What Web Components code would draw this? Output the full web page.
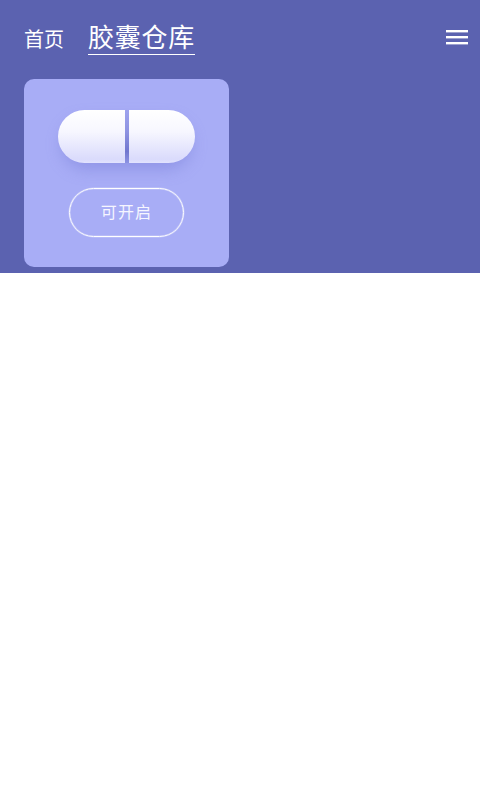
<!DOCTYPE html>
<html lang="zh">
<head>
<meta charset="utf-8">
<style>
  html, body { margin: 0; background: #fff; }
  body { font-family: "Roboto", "Noto Sans CJK SC", sans-serif; }
</style>
</head>
<body>
<capsule-page>
  <nav-tabs slot="nav">
    <span>首页</span>
    <span slot="active">胶囊仓库</span>
  </nav-tabs>
  <capsule-card label="可开启"></capsule-card>
</capsule-page>

<script>
class CapsulePage extends HTMLElement {
  constructor() {
    super();
    this.attachShadow({ mode: "open" }).innerHTML = `<style>
      :host { display: block; background: #5b62b0; height: 273px; box-sizing: border-box; }
      .top { display: flex; justify-content: space-between; align-items: flex-start; height: 79px; padding: 0 12px 0 24px; box-sizing: border-box; }
      .menu { display: block; margin-top: 30px; }
      .body { padding: 0 24px; }
    </style>
    <div class="top">
      <slot name="nav"></slot>
      <svg class="menu" width="22" height="15" viewBox="0 0 22 15" fill="#fff">
        <rect y="0" width="22" height="2.4"/>
        <rect y="6" width="22" height="2.4"/>
        <rect y="12" width="22" height="2.4"/>
      </svg>
    </div>
    <div class="body"><slot></slot></div>`;
  }
}

class NavTabs extends HTMLElement {
  constructor() {
    super();
    this.attachShadow({ mode: "open" }).innerHTML = `<style>
      :host { display: flex; align-items: flex-start; gap: 24px; color: #fff; }
      .plain { font-size: 20px; line-height: 28px; margin-top: 26px; }
      .active { font-size: 26px; line-height: 30px; margin-top: 23px; padding-bottom: 1px; border-bottom: 1px solid #fff; letter-spacing: .75px; }
    </style>
    <div class="plain"><slot></slot></div>
    <div class="active"><slot name="active"></slot></div>`;
  }
}

class CapsuleCard extends HTMLElement {
  constructor() {
    super();
    this.attachShadow({ mode: "open" }).innerHTML = `<style>
      :host { display: flex; flex-direction: column; align-items: center; width: 205px; height: 188px; box-sizing: border-box; padding-top: 31px; background: #a8adf6; border-radius: 10px; }
      .pill { position: relative; display: flex; gap: 4px; width: 137px; height: 53px; }
      .pill::before { content: ""; position: absolute; left: 4px; right: 4px; top: 10px; bottom: -6px; border-radius: 27px; background: rgba(96, 102, 200, .35); filter: blur(8px); }
      .pill i { position: relative; display: block; flex: 1; background: linear-gradient(#fff 0%, #f7f7ff 40%, #dadbfc 93%, #e2e3fe 100%); filter: blur(.4px); }
      .pill i:first-child { border-radius: 27px 0 0 27px; }
      .pill i:last-child { border-radius: 0 27px 27px 0; }
      .pill b { position: absolute; left: 67px; top: 0; bottom: 0; width: 4px; background: linear-gradient(#9ea3ee 0%, #8e93e2 40%, #7177cf 78%, #8c92e2 100%); }
      button { margin-top: 25px; width: 115px; height: 49px; box-sizing: border-box; border: 1px solid #fff; box-shadow: 0 0 0 .5px rgba(255, 255, 255, .35), inset 0 0 0 .5px rgba(255, 255, 255, .35); border-radius: 25px; background: none; color: #f6f6ff; font: inherit; font-size: 16px; letter-spacing: 1.2px; padding: 0 0 4px; }
    </style>
    <div class="pill"><i></i><b></b><i></i></div>
    <button></button>`;
    this.shadowRoot.querySelector("button").textContent = this.getAttribute("label");
  }
}

customElements.define("capsule-page", CapsulePage);
customElements.define("nav-tabs", NavTabs);
customElements.define("capsule-card", CapsuleCard);
</script>
</body>
</html>
